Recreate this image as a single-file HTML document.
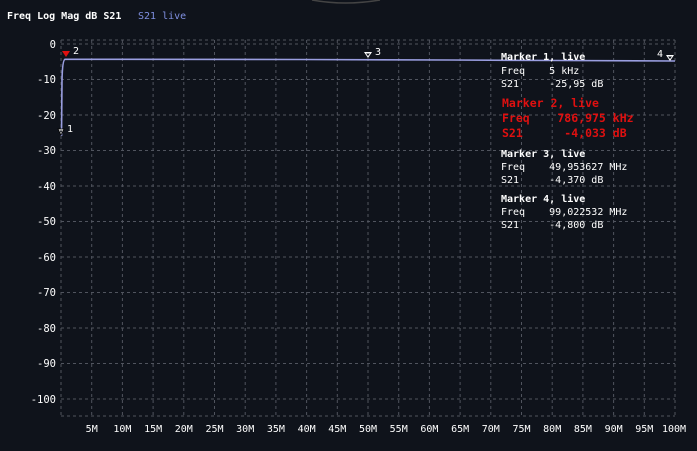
<!DOCTYPE html><html><head><style>
body{margin:0;background:#0f131b;width:697px;height:451px;overflow:hidden;font-family:"DejaVu Sans Mono","Liberation Mono",monospace;}
svg{position:absolute;left:0;top:0}
</style></head><body>
<svg width="697" height="451" xmlns="http://www.w3.org/2000/svg" font-family="DejaVu Sans Mono, Liberation Mono, monospace">
<path d="M312 0 Q345 6 380 0" stroke="#444" fill="none" stroke-width="1.5"/>
<text x="7" y="19" font-size="10" font-weight="bold" fill="#fff">Freq Log Mag dB S21</text>
<text x="138" y="19" font-size="10" fill="#7f8fe0">S21 live</text>
<g stroke="#50545e" stroke-dasharray="3,3" stroke-width="1">
<line x1="61" y1="40" x2="675" y2="40"/>
<line x1="61" y1="416" x2="675" y2="416"/>
<line x1="61" y1="44" x2="675" y2="44"/><line x1="61" y1="79.5" x2="675" y2="79.5"/><line x1="61" y1="115" x2="675" y2="115"/><line x1="61" y1="150.5" x2="675" y2="150.5"/><line x1="61" y1="186" x2="675" y2="186"/><line x1="61" y1="221.5" x2="675" y2="221.5"/><line x1="61" y1="257" x2="675" y2="257"/><line x1="61" y1="292.5" x2="675" y2="292.5"/><line x1="61" y1="328" x2="675" y2="328"/><line x1="61" y1="363.5" x2="675" y2="363.5"/><line x1="61" y1="399" x2="675" y2="399"/>
<line x1="61" y1="40" x2="61" y2="416"/><line x1="91.7" y1="40" x2="91.7" y2="416"/><line x1="122.4" y1="40" x2="122.4" y2="416"/><line x1="153.1" y1="40" x2="153.1" y2="416"/><line x1="183.8" y1="40" x2="183.8" y2="416"/><line x1="214.5" y1="40" x2="214.5" y2="416"/><line x1="245.2" y1="40" x2="245.2" y2="416"/><line x1="275.9" y1="40" x2="275.9" y2="416"/><line x1="306.6" y1="40" x2="306.6" y2="416"/><line x1="337.3" y1="40" x2="337.3" y2="416"/><line x1="368" y1="40" x2="368" y2="416"/><line x1="398.7" y1="40" x2="398.7" y2="416"/><line x1="429.4" y1="40" x2="429.4" y2="416"/><line x1="460.1" y1="40" x2="460.1" y2="416"/><line x1="490.8" y1="40" x2="490.8" y2="416"/><line x1="521.5" y1="40" x2="521.5" y2="416"/><line x1="552.2" y1="40" x2="552.2" y2="416"/><line x1="582.9" y1="40" x2="582.9" y2="416"/><line x1="613.6" y1="40" x2="613.6" y2="416"/><line x1="644.3" y1="40" x2="644.3" y2="416"/><line x1="675" y1="40" x2="675" y2="416"/>
</g>
<g font-size="10.5" fill="#fff" text-anchor="end">
<text x="56" y="48">0</text><text x="56" y="83">-10</text><text x="56" y="119">-20</text><text x="56" y="154">-30</text><text x="56" y="190">-40</text><text x="56" y="225">-50</text><text x="56" y="261">-60</text><text x="56" y="296">-70</text><text x="56" y="332">-80</text><text x="56" y="367">-90</text><text x="56" y="403">-100</text>
</g>
<g font-size="10" fill="#fff" text-anchor="middle">
<text x="91.7" y="432">5M</text><text x="122.4" y="432">10M</text><text x="153.1" y="432">15M</text><text x="183.8" y="432">20M</text><text x="214.5" y="432">25M</text><text x="245.2" y="432">30M</text><text x="275.9" y="432">35M</text><text x="306.6" y="432">40M</text><text x="337.3" y="432">45M</text><text x="368" y="432">50M</text><text x="398.7" y="432">55M</text><text x="429.4" y="432">60M</text><text x="460.1" y="432">65M</text><text x="490.8" y="432">70M</text><text x="521.5" y="432">75M</text><text x="552.2" y="432">80M</text><text x="582.9" y="432">85M</text><text x="613.6" y="432">90M</text><text x="644.3" y="432">95M</text><text x="674" y="432">100M</text>
</g>
<path d="M61.5 136 L62 80 Q62.5 60 65 59.3 L300 59.5 L450 60 L560 60.5 L675 61" stroke="#9a9ee0" stroke-width="1.6" fill="none"/>
<path d="M58 129 L64 129 L61 135 Z" fill="#fff" stroke="#000" stroke-width="0.8"/>
<path d="M59.5 130.5 L62.5 130.5 L61 133 Z" fill="#0f131b"/>
<text x="67" y="132" font-size="10" fill="#fff">1</text>
<path d="M62 51 L70 51 L66 57 Z" fill="#e01010"/>
<text x="73" y="54" font-size="10" fill="#fff">2</text>
<path d="M364 52 L372 52 L368 58 Z" fill="#fff"/><path d="M366 53.5 L370 53.5 L368 56 Z" fill="#0f131b"/>
<text x="375" y="55" font-size="10" fill="#fff">3</text>
<path d="M666 55 L674 55 L670 61 Z" fill="#fff"/><path d="M668 56.5 L672 56.5 L670 59 Z" fill="#0f131b"/>
<text x="657" y="57" font-size="10" fill="#fff">4</text>
<g font-size="10" fill="#fff">
<text x="501" y="60" font-weight="bold">Marker 1, live</text>
<text x="501" y="74" xml:space="preserve">Freq    5 kHz</text>
<text x="501" y="87" xml:space="preserve">S21     -25,95 dB</text>
<text x="501" y="157" font-weight="bold">Marker 3, live</text>
<text x="501" y="170" xml:space="preserve">Freq    49,953627 MHz</text>
<text x="501" y="183" xml:space="preserve">S21     -4,370 dB</text>
<text x="501" y="202" font-weight="bold">Marker 4, live</text>
<text x="501" y="215" xml:space="preserve">Freq    99,022532 MHz</text>
<text x="501" y="228" xml:space="preserve">S21     -4,800 dB</text>
</g>
<g font-size="11.5" fill="#e01010" font-weight="bold">
<text x="502" y="107">Marker 2, live</text>
<text x="502" y="122" xml:space="preserve">Freq    786,975 kHz</text>
<text x="502" y="137" xml:space="preserve">S21      -4,033 dB</text>
</g>
</svg>
</body></html>
